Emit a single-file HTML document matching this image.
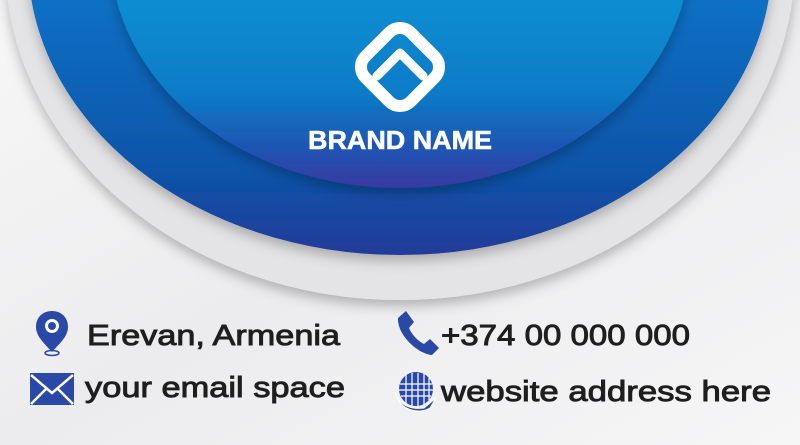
<!DOCTYPE html>
<html><head><style>
html,body{margin:0;padding:0;width:800px;height:445px;overflow:hidden;background:#f4f4f5;}
</style></head><body>
<svg width="800" height="445" style="position:absolute;left:0;top:0">
<defs>
<linearGradient id="bg" x1="0" y1="0" x2="1" y2="1">
<stop offset="0" stop-color="#f7f7f7"/><stop offset="0.5" stop-color="#ececee"/><stop offset="1" stop-color="#f6f6f7"/></linearGradient>
<linearGradient id="blue" x1="0" y1="0" x2="0" y2="1">
<stop offset="0" stop-color="#0a9ee4"/><stop offset="0.55" stop-color="#0872c6"/><stop offset="0.85" stop-color="#0a55aa"/><stop offset="1" stop-color="#233c98"/></linearGradient>
<linearGradient id="inner" x1="0" y1="0" x2="0" y2="1">
<stop offset="0" stop-color="#06a8dc"/><stop offset="0.55" stop-color="#0892d4"/><stop offset="0.8" stop-color="#0a7cc8"/><stop offset="0.93" stop-color="#2250b0"/><stop offset="1" stop-color="#3a3aa0"/></linearGradient>
<filter id="sh" x="-20%" y="-20%" width="140%" height="140%"><feDropShadow dx="0" dy="6" stdDeviation="6" flood-color="#000" flood-opacity="0.25"/></filter>
</defs>
<rect width="800" height="445" fill="url(#bg)"/>
<ellipse cx="400" cy="-40" rx="395" ry="340" fill="#e4e4e6" filter="url(#sh)"/>
<ellipse cx="400" cy="-40" rx="372" ry="295" fill="url(#blue)" filter="url(#sh)"/>
<ellipse cx="400" cy="-50" rx="290" ry="238" fill="url(#inner)" filter="url(#sh)"/>
<g transform="translate(400,67) rotate(45)">
<rect x="-32" y="-32" width="64" height="64" rx="15" fill="none" stroke="#fff" stroke-width="12"/>
</g>
<path d="M377 76 L400 53 L423 76" fill="none" stroke="#fff" stroke-width="9" stroke-linecap="round" stroke-linejoin="round"/>
<text x="400" y="149" text-anchor="middle" font-family="Liberation Sans,Arial,sans-serif" font-weight="bold" font-size="26" fill="#fff" stroke="#fff" stroke-width="0.6" textLength="184" lengthAdjust="spacingAndGlyphs">BRAND NAME</text>
<!-- pin -->
<path d="M52 311 C42 311 36 318 36 327 C36 337 46 345 52 352 C58 345 68 337 68 327 C68 318 62 311 52 311Z" fill="#2a48a6"/>
<circle cx="52" cy="326" r="7" fill="#fff"/><circle cx="52" cy="326" r="4" fill="#2a48a6"/>
<ellipse cx="52" cy="353" rx="7" ry="2.5" fill="none" stroke="#2a48a6" stroke-width="1.5"/>
<!-- envelope -->
<rect x="30" y="373" width="44" height="32" fill="#2a48a6"/>
<path d="M31 375 L52 393 L73 375 M31 404 L46 389 M73 404 L58 389" fill="none" stroke="#fff" stroke-width="2.5"/>
<!-- phone -->
<path d="M398 318 L406 311 L414 322 L409 328 C412 335 418 341 424 344 L430 339 L439 348 L432 355 C418 354 397 335 398 318Z" fill="#2a48a6"/>
<!-- globe -->
<circle cx="416" cy="389" r="17" fill="#2a48a6"/>
<g stroke="#fff" stroke-width="1.2" fill="none">
<path d="M400 384 H432 M399 390 H433 M401 396 H431"/>
<path d="M406 374 V404 M412 373 V406 M418 373 V406 M424 374 V404 M429 378 V400"/>
</g>
<path d="M395 392 C398 404 410 410 424 408 L436 398 L430 408 C420 414 400 412 395 392Z" fill="#2a48a6" stroke="#fff" stroke-width="1"/>
<g font-family="Liberation Sans,Arial,sans-serif" font-size="29" fill="#1e1e1e" stroke="#1e1e1e" stroke-width="0.9">
<text x="87" y="345" textLength="253" lengthAdjust="spacingAndGlyphs">Erevan, Armenia</text>
<text x="85" y="397" textLength="260" lengthAdjust="spacingAndGlyphs">your email space</text>
<text x="441" y="345" textLength="249" lengthAdjust="spacingAndGlyphs">+374 00 000 000</text>
<text x="441" y="401" textLength="330" lengthAdjust="spacingAndGlyphs">website address here</text>
</g>
</svg>
</body></html>
